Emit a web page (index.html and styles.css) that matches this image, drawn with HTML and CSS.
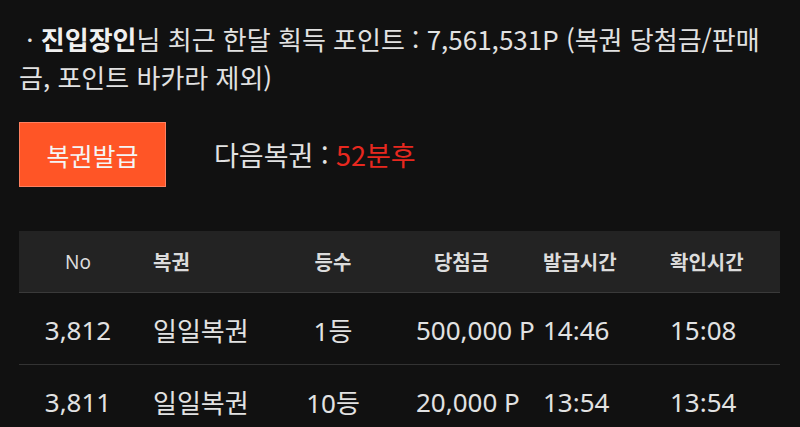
FILE: index.html
```html
<!DOCTYPE html>
<html lang="ko">
<head>
<meta charset="utf-8">
<link rel="stylesheet" href="styles.css">
</head>
<body>
<div class="page">
  <p class="info">&nbsp;· <b>진입장인</b>님 최근 한달 획득 포인트 : 7,561,531P (복권 당첨금/판매금, 포인트 바카라 제외)</p>
  <div class="action">
    <button class="issue">복권발급</button>
    <span class="next">다음복권 : <em>52분후</em></span>
  </div>
  <div class="table">
    <div class="row head">
      <div class="c1">No</div><div class="c2">복권</div><div class="c3">등수</div><div class="c4">당첨금</div><div class="c5">발급시간</div><div class="c6">확인시간</div>
    </div>
    <div class="row body">
      <div class="c1">3,812</div><div class="c2">일일복권</div><div class="c3">1등</div><div class="c4 l">500,000 P</div><div class="c5">14:46</div><div class="c6">15:08</div>
    </div>
    <div class="row body">
      <div class="c1">3,811</div><div class="c2">일일복권</div><div class="c3">10등</div><div class="c4 l">20,000 P</div><div class="c5">13:54</div><div class="c6">13:54</div>
    </div>
  </div>
</div>
</body>
</html>
```
FILE: styles.css
```css
html, body { margin: 0; background: #111111; }
body { font-family: "Noto Sans CJK KR", "Noto Sans", sans-serif; color: #e2e2e2; overflow: hidden; height: 427px; }
.page { padding: 20px 20px 0 19px; }
.info { margin: 0; font-size: 26px; line-height: 38px; width: 750px; }
.info b { font-weight: 700; color: #f0f0f0; }
.action { display: flex; align-items: center; margin-top: 26px; gap: 48px; }
.issue { width: 147px; height: 65px; background: #ff5526; border: 1px solid #ff8060; color: #f5f5f5; font-family: inherit; font-size: 25px; padding: 0; }
.next { font-size: 27px; }
.next em { font-style: normal; color: #e8281f; }
.table { margin-top: 44px; width: 761px; }
.row { display: grid; grid-template-columns: 118px 133px 126px 131px 127px 126px; height: 72px; align-items: center; border-bottom: 1px solid #333; white-space: nowrap; }
.row.body { font-family: "Noto Sans", "Noto Sans CJK KR", sans-serif; font-size: 26px; padding-top: 2px; box-sizing: border-box; }
.row.head { height: 61px; background: #232323; font-size: 20px; font-weight: 700; color: #dcdcdc; border-bottom: 1px solid #3a3a3a; }
.row.head .c1 { font-weight: 400; font-family: "Noto Sans", sans-serif; font-size: 19px; }
.c1, .c3 { text-align: center; }
.c2 { padding-left: 16px; }
.c4 { text-align: center; }
.c4.l { text-align: left; padding-left: 20px; }
.c5, .c6 { padding-left: 16px; }
```
